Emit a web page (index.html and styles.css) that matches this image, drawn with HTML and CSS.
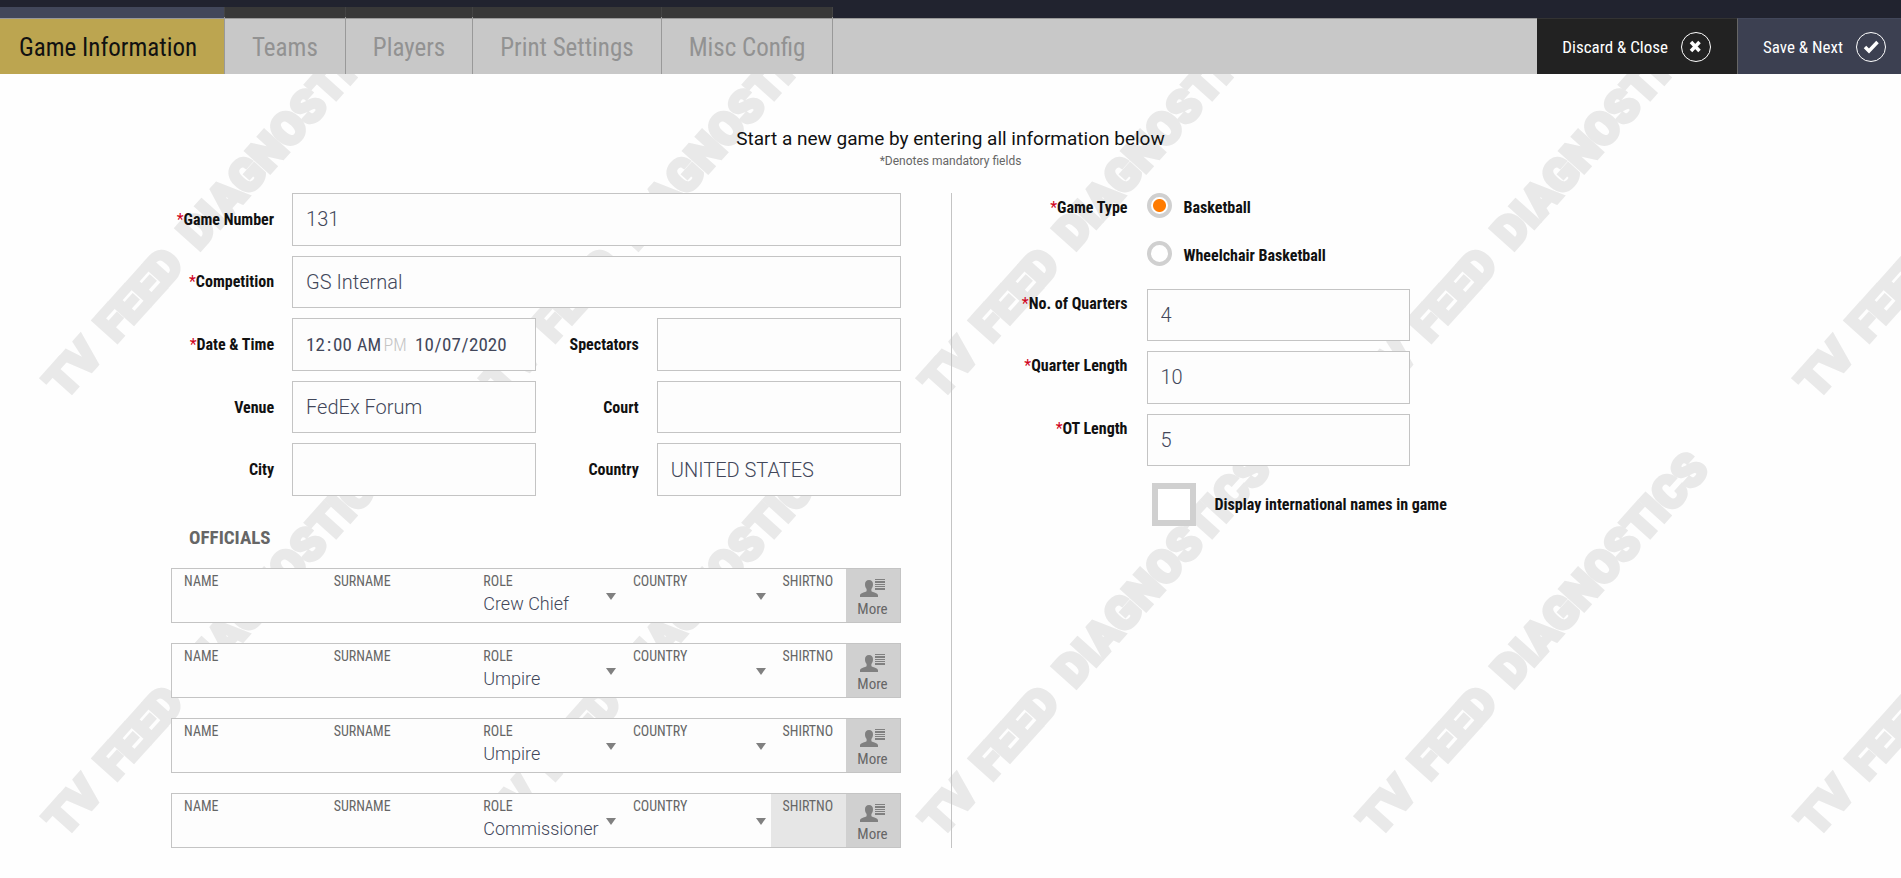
FILE: index.html
```html
<!DOCTYPE html>
<html lang="en">
<head>
    <meta charset="UTF-8">
    <meta name="viewport" content="width=device-width, initial-scale=1.0">
    <title>Game Information</title>
    <link rel="stylesheet" href="styles.css">
</head>
<body>
    <!-- Watermark -->
    <svg class="watermark" aria-hidden="true">
        <defs>
            <pattern id="feed" width="438" height="438" patternUnits="userSpaceOnUse">
                <text class="watermark-text" transform="translate(65 400) rotate(-48)">TV<tspan x="76">FEED</tspan><tspan x="200">DIAGNOSTICS</tspan></text>
            </pattern>
        </defs>
        <rect width="100%" height="100%" fill="url(#feed)"/>
    </svg>

    <!-- Shared icons -->
    <svg class="sprite" aria-hidden="true">
        <symbol id="icon-more" viewBox="0 0 25 18">
            <path d="M9 1c2.600 0 4 1.700 4 4.300 0 2-.6 3.700-1.600 4.700v2.300c1 1 6.600 1.500 6.600 4V18H0v-1.700c0-2.500 5.600-3 6.600-4V10C5.600 9 5 7.300 5 5.300 5 2.700 6.400 1 9 1z"/>
            <path d="M15 0h10v1H15zM15 2h10v2H15zM15 5h10v1H15zM15 7h10v1H15zM15 9h10v2H15z"/>
        </symbol>
    </svg>

    <header>
        <nav class="tabs">
            <a href="#" class="tab active">Game Information</a>
            <a href="#" class="tab">Teams</a>
            <a href="#" class="tab">Players</a>
            <a href="#" class="tab">Print Settings</a>
            <a href="#" class="tab">Misc Config</a>
        </nav>
        <div class="actions">
            <button type="button" class="action discard">Discard &amp; Close
                <svg width="30" height="30" viewBox="0 0 30 30"><circle cx="15" cy="15" r="14.500" fill="none" stroke="#fff"/><path d="M10 10l8.500 9M18.500 10L10 19" fill="none" stroke="#fff" stroke-width="3.500"/></svg>
            </button>
            <button type="button" class="action save">Save &amp; Next
                <svg width="30" height="30" viewBox="0 0 30 30"><circle cx="15" cy="15" r="14.500" fill="none" stroke="#fff"/><path d="M9 15l4 4L21.500 10" fill="none" stroke="#fff" stroke-width="3.500"/></svg>
            </button>
        </div>
    </header>

    <main>
        <h1>Start a new game by entering all information below</h1>
        <p class="note">*Denotes mandatory fields</p>

        <form class="columns">
            <div class="left">
                <div class="fields">
                    <label for="gameNumber"><i>*</i>Game Number</label>
                    <input class="box wide" type="text" id="gameNumber" value="131">
                    <label for="competition"><i>*</i>Competition</label>
                    <input class="box wide" type="text" id="competition" value="GS Internal">
                    <label for="hour"><i>*</i>Date &amp; Time</label>
                    <div class="box datetime">
                        <input type="text" id="hour" value="12" aria-label="Hour"><span>:</span><input type="text" value="00" aria-label="Minute">
                        <button type="button" class="am">AM</button><button type="button" class="pm">PM</button>
                        <input type="text" value="10" aria-label="Day"><span>/</span><input type="text" value="07" aria-label="Month"><span>/</span><input type="text" class="year" value="2020" aria-label="Year">
                    </div>
                    <label for="spectators">Spectators</label>
                    <input class="box" type="text" id="spectators">
                    <label for="venue">Venue</label>
                    <input class="box" type="text" id="venue" value="FedEx Forum">
                    <label for="court">Court</label>
                    <input class="box" type="text" id="court">
                    <label for="city">City</label>
                    <input class="box" type="text" id="city">
                    <label for="country">Country</label>
                    <input class="box" type="text" id="country" value="UNITED STATES">
                </div>

                <h2>OFFICIALS</h2>

                <div class="official">
                    <label class="cell">NAME<input type="text"></label>
                    <label class="cell">SURNAME<input type="text"></label>
                    <label class="cell drop">ROLE<select><option>Crew Chief</option></select></label>
                    <label class="cell drop">COUNTRY<select><option></option></select></label>
                    <label class="cell">SHIRTNO<input type="text"></label>
                    <button type="button" class="more"><svg width="25" height="18"><use href="#icon-more"/></svg>More</button>
                </div>
                <div class="official">
                    <label class="cell">NAME<input type="text"></label>
                    <label class="cell">SURNAME<input type="text"></label>
                    <label class="cell drop">ROLE<select><option>Umpire</option></select></label>
                    <label class="cell drop">COUNTRY<select><option></option></select></label>
                    <label class="cell">SHIRTNO<input type="text"></label>
                    <button type="button" class="more"><svg width="25" height="18"><use href="#icon-more"/></svg>More</button>
                </div>
                <div class="official">
                    <label class="cell">NAME<input type="text"></label>
                    <label class="cell">SURNAME<input type="text"></label>
                    <label class="cell drop">ROLE<select><option>Umpire</option></select></label>
                    <label class="cell drop">COUNTRY<select><option></option></select></label>
                    <label class="cell">SHIRTNO<input type="text"></label>
                    <button type="button" class="more"><svg width="25" height="18"><use href="#icon-more"/></svg>More</button>
                </div>
                <div class="official">
                    <label class="cell">NAME<input type="text"></label>
                    <label class="cell">SURNAME<input type="text"></label>
                    <label class="cell drop">ROLE<select><option>Commissioner</option></select></label>
                    <label class="cell drop">COUNTRY<select><option></option></select></label>
                    <label class="cell disabled">SHIRTNO<input type="text" disabled></label>
                    <button type="button" class="more"><svg width="25" height="18"><use href="#icon-more"/></svg>More</button>
                </div>
            </div>

            <div class="right">
                <div class="types" role="radiogroup" aria-labelledby="typeLabel">
                    <span class="title" id="typeLabel"><i>*</i>Game Type</span>
                    <div class="options">
                        <label class="option"><input type="radio" name="type" checked>Basketball</label>
                        <label class="option"><input type="radio" name="type">Wheelchair Basketball</label>
                    </div>
                </div>
                <div class="lengths">
                    <label class="title" for="quarters"><i>*</i>No. of Quarters</label>
                    <input class="box" type="text" id="quarters" value="4">
                    <label class="title" for="quarterLength"><i>*</i>Quarter Length</label>
                    <input class="box" type="text" id="quarterLength" value="10">
                    <label class="title" for="otLength"><i>*</i>OT Length</label>
                    <input class="box" type="text" id="otLength" value="5">
                </div>
                <label class="names"><input type="checkbox">Display international names in game</label>
            </div>
        </form>
    </main>
</body>
</html>
```
FILE: styles.css
```css
* {
    box-sizing: border-box;
}
body {
    margin: 0;
    min-height: 100vh;
    position: relative;
    background-color: #fefefe;
    font-family: 'Roboto Condensed', 'Liberation Sans Narrow', Roboto, sans-serif;
    color: #111;
}
input, button, select {
    font-family: inherit;
    margin: 0;
}
.watermark {
    position: absolute;
    top: 0;
    left: 0;
    width: 100%;
    height: 100%;
    z-index: -1;
}
.watermark-text {
    font-family: Roboto, sans-serif;
    font-size: 45px;
    font-weight: 900;
    fill: #e9e9e9;
    stroke: #e9e9e9;
    stroke-width: 4px;
}
.sprite {
    position: absolute;
    width: 0;
    height: 0;
}

/* Top bar */
header {
    display: flex;
    justify-content: space-between;
    height: 74px;
    background: linear-gradient(#21232f 18px, #999 18px, #999 19px, #c8c8c8 19px);
}
.tabs {
    display: flex;
    margin-top: 7px;
}
.tab {
    padding: 11px 27px 0;
    border-right: 1px solid #999;
    border-image: linear-gradient(#444 11px, #999 11px) 1;
    background: linear-gradient(#383838 11px, #999 11px, #999 12px, #c8c8c8 12px);
    color: #929292;
    font-size: 25px;
    line-height: 60px;
    text-decoration: none;
}
.tab.active {
    padding-left: 19px;
    background: linear-gradient(#42475a 11px, #999 11px, #999 12px, #bca550 12px);
    color: #111;
}
.actions {
    display: flex;
    margin-top: 18px;
}
.action {
    display: flex;
    align-items: center;
    gap: 13px;
    padding: 0 26px 0 25px;
    border: 0;
    border-top: 1px solid #333;
    background-color: #222;
    color: #fff;
    font-size: 17px;
}
.save {
    padding-right: 15px;
    border-top-color: #42475a;
    border-left: 1px solid #666;
    background-color: #3c4051;
}

/* Heading */
h1 {
    margin: 53px 0 0;
    font-family: Roboto, sans-serif;
    font-size: 19px;
    font-weight: 400;
    line-height: 24px;
    text-align: center;
}
.note {
    margin: 0 0 22px;
    font-family: Roboto, sans-serif;
    font-size: 12px;
    line-height: 20px;
    text-align: center;
    color: #666;
}

/* Form */
.columns {
    display: grid;
    grid-template-columns: 1fr 1fr;
}
.left {
    padding: 0 50px 0 18%;
}
.fields {
    display: grid;
    grid-template-columns: 121px 1fr 121px 1fr;
    grid-auto-rows: 1fr;
    row-gap: 10px;
    height: 303px;
}
.fields label {
    align-self: center;
    padding-right: 18px;
    text-align: right;
    font-size: 16px;
    font-weight: 700;
}
i {
    color: #d0021b;
    font-style: normal;
    font-weight: 400;
}
.box {
    width: 100%;
    min-width: 0;
    padding: 0 13px;
    border: 1px solid #c4c4c4;
    background-color: #fdfdfd;
    color: #42475a;
    font-family: Roboto, sans-serif;
    font-size: 20px;
    font-weight: 300;
}
.wide {
    grid-column: span 3;
}
.datetime {
    display: flex;
    align-items: center;
    font-family: 'Roboto Condensed', 'Liberation Sans Narrow', Roboto, sans-serif;
    font-size: 19px;
    font-weight: 400;
}
.datetime input, .datetime button {
    width: 19px;
    padding: 0;
    border: 0;
    background: none;
    color: inherit;
    font-size: 19px;
}
.datetime span {
    width: 8px;
    text-align: center;
}
.datetime .year {
    width: 40px;
}
.datetime .am, .datetime .pm {
    width: 24px;
    margin-left: 5px;
    font-size: 18px;
}
.datetime .pm {
    margin: 0 8px 0 2px;
    color: #c4c4c4;
    font-weight: 300;
}

/* Officials */
h2 {
    margin: 28px 0 16px 18px;
    font-size: 19px;
    line-height: 28px;
    color: #666;
}
.official {
    display: grid;
    grid-template-columns: repeat(4, 1fr) 75px 54px;
    height: 55px;
    margin-bottom: 20px;
    border: 1px solid #c4c4c4;
    background-color: #fdfdfd;
}
.official:last-child {
    margin-bottom: 0;
}
.cell {
    position: relative;
    min-width: 0;
    padding: 3px 0 0 12px;
    font-size: 14px;
    line-height: 18px;
    color: #666;
}
.cell input, .cell select {
    display: block;
    width: 100%;
    height: 26px;
    padding: 0;
    border: 0;
    background: none;
    appearance: none;
    color: #42475a;
    font-family: Roboto, sans-serif;
    font-size: 18px;
    font-weight: 300;
}
.drop::after {
    content: "";
    position: absolute;
    top: 24px;
    right: 5px;
    border: 5px solid transparent;
    border-top: 7px solid #808080;
    border-bottom: 0;
}
.disabled {
    background-color: #e6e6e6;
}
.more {
    display: flex;
    flex-direction: column;
    align-items: center;
    padding: 10px 0 0;
    border: 0;
    background-color: #d0d0d0;
    color: #666;
    font-size: 15px;
    line-height: 24px;
}
.more svg {
    flex: none;
    fill: #808080;
}

/* Right side */
.right {
    border-left: 1px solid #c4c4c4;
    font-size: 16px;
    font-weight: 700;
    line-height: 30px;
}
.types, .lengths {
    display: grid;
    grid-template-columns: 195px 263px;
}
.title {
    padding-right: 19px;
    text-align: right;
}
.options {
    display: flex;
    flex-direction: column;
    gap: 18px;
}
.option {
    display: flex;
    gap: 12px;
}
.option input {
    flex: none;
    appearance: none;
    width: 25px;
    height: 25px;
    border: 4px solid #d0d0d0;
    border-radius: 50%;
    background-color: #fff;
}
.option input:checked {
    background: radial-gradient(circle, #ff7b00 6px, #fff 7px);
}
.lengths {
    grid-auto-rows: 1fr;
    row-gap: 10px;
    height: 177px;
    margin-top: 18px;
}
.names {
    display: flex;
    align-items: center;
    gap: 19px;
    width: max-content;
    margin: 17px 0 0 200px;
}
.names input {
    appearance: none;
    width: 44px;
    height: 43px;
    border: 6px solid #d0d0d0;
    background-color: #fff;
}
```
